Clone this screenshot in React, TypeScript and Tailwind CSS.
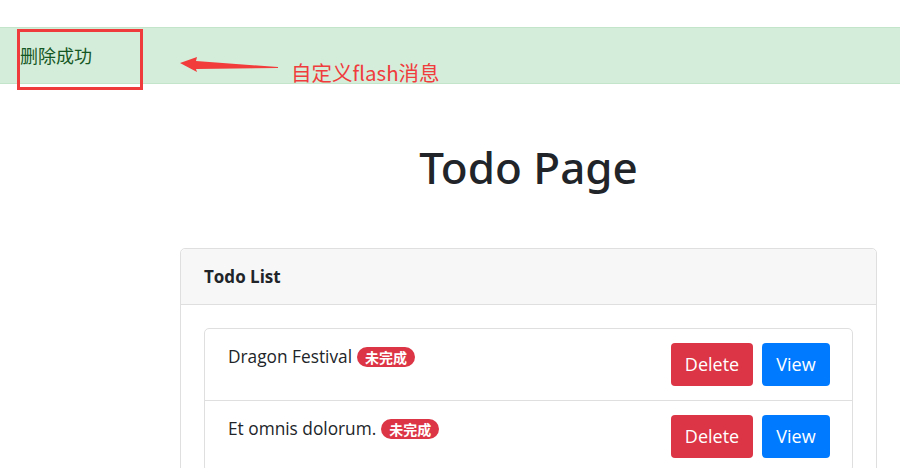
import React from 'react';

export default function App() {
  const todos = [
    { title: 'Dragon Festival', done: false },
    { title: 'Et omnis dolorum.', done: false },
  ];

  return (
    <div className="min-h-[468px] bg-white text-[#212529] overflow-hidden" style={{ fontFamily: '"Open Sans", "Noto Sans CJK SC", sans-serif' }}>
      <div className="h-[27px]" />

      {/* flash message */}
      <div className="relative h-[57px] bg-[#d4edda] border-y border-[#c3e6cb] flex items-center px-5">
        <span className="text-[18px] text-[#155724]" style={{ fontFamily: '"Noto Sans CJK SC", sans-serif' }}>删除成功</span>
        <div className="absolute left-[17px] top-[1px] w-[126px] h-[61px] border-[3px] border-[#ef3b3b]" />
        <svg className="absolute left-[178px] top-[28px]" width="104" height="18" viewBox="0 0 104 18">
          <polygon points="2,7 19,1 18,5 100,11 100,12 18,13 19,16" fill="#f23b3b" />
        </svg>
        <span className="absolute left-[291px] top-[30px] text-[20.5px] leading-[28px] text-[#f03c3c]" style={{ fontFamily: '"Noto Sans CJK SC", sans-serif' }}>
          自定义flash消息
        </span>
      </div>

      <div className="pl-[180px] pr-[23px]">
        <h1 className="text-center text-[44px] leading-[52px] font-medium mt-[57px] mb-[55px]" style={{ fontFamily: '"Noto Sans", sans-serif' }}>
          Todo Page
        </h1>

        <div className="border border-[#dfdfdf] rounded-[5px]">
          <div className="h-[56px] bg-[#f7f7f7] border-b border-[#dfdfdf] px-[23px] flex items-center rounded-t-[5px]">
            <span className="text-[17px] font-bold">Todo List</span>
          </div>
          <div className="p-[23px]">
            <div className="border border-[#dfdfdf] rounded-[5px]">
              {todos.map((t, i) => (
                <div
                  key={i}
                  className={`h-[71px] pl-[23px] pr-[22px] pt-[14px] flex justify-between items-start ${i > 0 ? 'border-t border-[#dfdfdf]' : ''}`}
                >
                  <div className="flex items-center h-[28px] text-[17.3px]">
                    <span>{t.title}</span>
                    <span
                      className="ml-[5px] bg-[#dc3545] text-white text-[14px] font-bold leading-none rounded-full px-[8px] py-[3px]"
                      style={{ fontFamily: '"Noto Sans CJK SC", sans-serif' }}
                    >
                      未完成
                    </span>
                  </div>
                  <div className="flex gap-[9px]">
                    <button className="w-[82px] h-[43px] bg-[#dc3545] text-white text-[18px] rounded-[4px]">Delete</button>
                    <button className="w-[68px] h-[43px] bg-[#007bff] text-white text-[18px] rounded-[4px]">View</button>
                  </div>
                </div>
              ))}
            </div>
          </div>
        </div>
      </div>
    </div>
  );
}
